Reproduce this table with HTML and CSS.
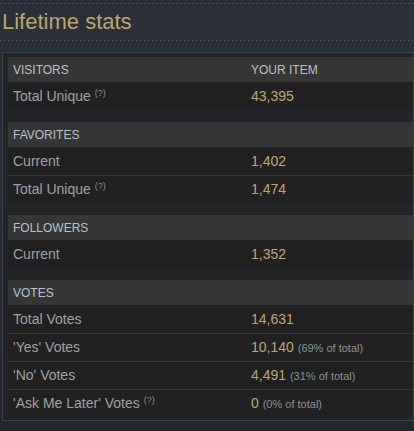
FILE: index.html
```html
<!DOCTYPE html>
<html lang="en">
<head>
  <meta charset="UTF-8">
  <meta name="viewport" content="width=device-width, initial-scale=1.0">
  <title>Lifetime stats</title>
  <link rel="stylesheet" href="styles.css">
</head>
<body>

<div class="dots"></div>
<h2 class="title">Lifetime stats</h2>
<div class="dots"></div>

<section class="panel">
  <table class="stats">
    <tr class="head"><th>VISITORS</th><th>YOUR ITEM</th></tr>
    <tr><td>Total Unique <sup>(?)</sup></td><td class="val">43,395</td></tr>
  </table>

  <table class="stats">
    <tr class="head"><th>FAVORITES</th><th></th></tr>
    <tr><td>Current</td><td class="val">1,402</td></tr>
    <tr><td>Total Unique <sup>(?)</sup></td><td class="val">1,474</td></tr>
  </table>

  <table class="stats">
    <tr class="head"><th>FOLLOWERS</th><th></th></tr>
    <tr><td>Current</td><td class="val">1,352</td></tr>
  </table>

  <table class="stats last">
    <tr class="head"><th>VOTES</th><th></th></tr>
    <tr><td>Total Votes</td><td class="val">14,631</td></tr>
    <tr><td>'Yes' Votes</td><td class="val">10,140 <span class="pct">(69% of total)</span></td></tr>
    <tr><td>'No' Votes</td><td class="val">4,491 <span class="pct">(31% of total)</span></td></tr>
    <tr><td>'Ask Me Later' Votes <sup>(?)</sup></td><td class="val">0 <span class="pct">(0% of total)</span></td></tr>
  </table>
</section>

</body>
</html>
```

FILE: styles.css
```css
* { box-sizing: border-box; }
body {
  margin: 0;
  padding-top: 3px;
  min-height: 431px;
  font-family: "Liberation Sans", Arial, sans-serif;
  background: linear-gradient(180deg, #2b3039 0%, #272b33 60%, #24272d 100%);
  overflow: hidden;
}
.dots {
  height: 1px;
  background-image: repeating-linear-gradient(90deg, #56606c 0 1px, transparent 1px 4px);
}
.title {
  margin: 0;
  padding: 5px 0 5px 2px;
  font-size: 22px;
  line-height: 26px;
  font-weight: normal;
  color: #bca46f;
}
.panel {
  margin: 11px 0 0 2px;
  width: 412px;
  padding: 4px 0 3px 5px;
  background: #232428;
  border: 1px solid #3a414b;
}
.stats {
  width: 100%;
  border-collapse: collapse;
  margin-bottom: 12px;
}
.stats.last { margin-bottom: 0; }
.stats th, .stats td {
  text-align: left;
  padding: 0 0 0 5px;
  font-weight: normal;
}
.stats th:first-child, .stats td:first-child { width: 238px; }
.head th {
  height: 25px;
  background: #363636;
  color: #b7c2cc;
  font-size: 12px;
}
.stats td {
  height: 28px;
  background: #212121;
  color: #9ea2a7;
  font-size: 14px;
  border-bottom: 1px solid #383838;
}
.stats tr:last-child td { border-bottom: none; }
.stats td.val { color: #bca67c; }
sup {
  font-size: 9px;
  color: #8b9096;
  vertical-align: 5px;
}
.pct {
  font-size: 11px;
  color: #8b9096;
}
```
